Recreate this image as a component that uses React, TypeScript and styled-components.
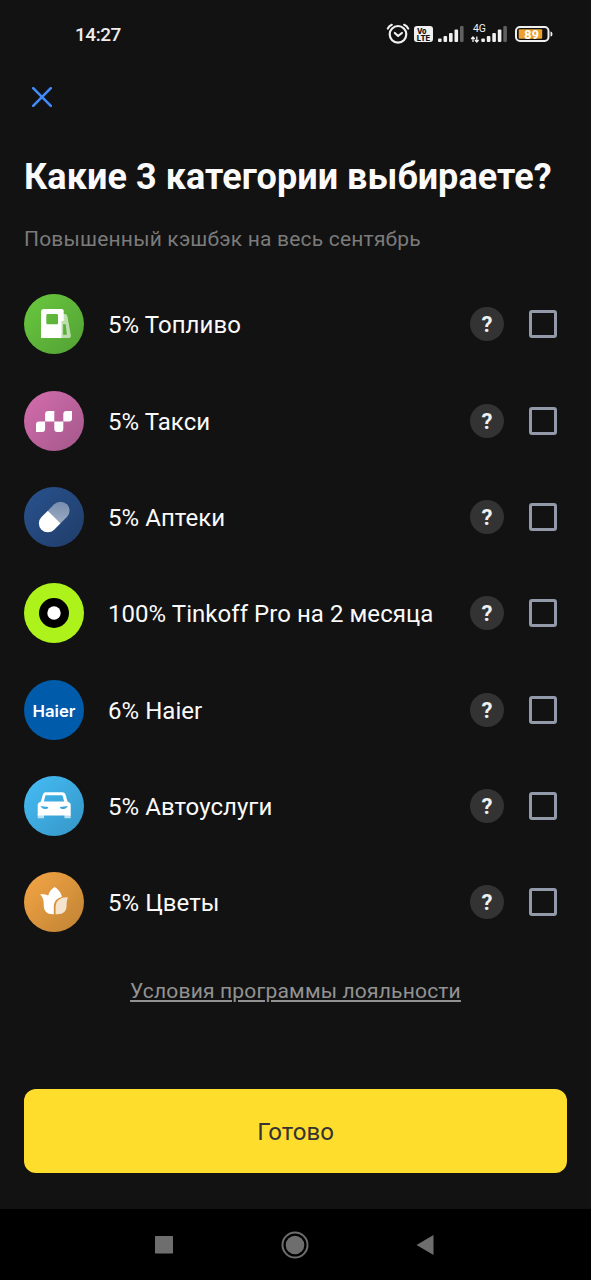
import React from "react";
import styled, { createGlobalStyle } from "styled-components";

const GlobalStyle = createGlobalStyle`
  * { box-sizing: border-box; }
  body { margin: 0; background: #121212; }
`;

const Screen = styled.div`
  width: 591px;
  height: 1280px;
  display: flex;
  flex-direction: column;
  overflow: hidden;
  background: #121212;
  color: #fafafa;
  font-family: Roboto, sans-serif;
`;

const StatusBar = styled.header`
  height: 68px;
  flex: none;
  display: flex;
  align-items: center;
  justify-content: space-between;
  padding: 0 37px 0 75px;
`;

const Clock = styled.time`
  font-size: 19px;
  font-weight: 500;
  line-height: 24px;
  letter-spacing: -0.45px;
  color: #ededed;
  padding-top: 2px;
`;

const Content = styled.main`
  flex: 1;
  display: flex;
  flex-direction: column;
  padding: 0 24px;
`;

const CloseButton = styled.button`
  width: 36px;
  height: 36px;
  margin-top: 11px;
  padding: 0;
  border: 0;
  background: none;
  display: grid;
  place-items: center;
`;

const Title = styled.h1`
  margin: 41px 0 0;
  font-size: 36px;
  font-weight: 700;
  line-height: 42px;
  letter-spacing: 0.06px;
  white-space: nowrap;
`;

const Subtitle = styled.p`
  margin: 28px 0 0;
  font-size: 21px;
  line-height: 26px;
  letter-spacing: 0.19px;
  color: #7b7b7b;
  white-space: nowrap;
`;

const List = styled.ul`
  list-style: none;
  margin: 24.3px 0 0;
  padding: 0;
`;

const Row = styled.li`
  height: 96.3px;
  display: flex;
  align-items: center;
`;

const Label = styled.span`
  flex: 1;
  margin-left: 24px;
  padding-top: 2px;
  font-size: 24px;
  line-height: 30px;
  letter-spacing: 0.05px;
  white-space: nowrap;
`;

const HelpButton = styled.button`
  width: 34px;
  height: 34px;
  padding: 1px 0 0;
  border: 0;
  border-radius: 50%;
  background: #333;
  color: #f0f0f0;
  font: 700 22px/33px Roboto, sans-serif;
  text-align: center;
`;

const Checkbox = styled.span`
  width: 28px;
  height: 28px;
  margin: 0 10.5px 0 24.5px;
  border: 3px solid #9299a8;
  border-radius: 3px;
`;

const Terms = styled.a`
  align-self: center;
  margin-top: 27.7px;
  font-size: 21px;
  line-height: 26px;
  letter-spacing: 0.19px;
  color: #929292;
  text-decoration: underline;
  text-decoration-thickness: 1.5px;
  text-underline-offset: 2px;
  white-space: nowrap;
`;

const DoneButton = styled.button`
  height: 84px;
  margin: auto 0 36px;
  padding: 2px 0 0;
  border: 0;
  border-radius: 12px;
  background: #ffdd2d;
  color: #333;
  font: 400 24px/30px Roboto, sans-serif;
`;

const NavBar = styled.nav`
  height: 71px;
  flex: none;
  display: flex;
  align-items: center;
  justify-content: space-between;
  padding: 0 155px 0 154px;
  background: #000;
`;

const Glyph = styled.svg`
  display: block;
  flex: none;
`;

const Disc = ({ id, from, to, children }: { id: string; from: string; to: string; children: React.ReactNode }) => (
  <Glyph width="60" height="60" viewBox="0 0 60 60">
    <defs>
      <linearGradient id={id} x1="0.1" y1="0.1" x2="0.9" y2="0.9">
        <stop stopColor={from} />
        <stop offset="1" stopColor={to} />
      </linearGradient>
    </defs>
    <circle cx="30" cy="30" r="30" fill={`url(#${id})`} />
    {children}
  </Glyph>
);

const FuelIcon = () => (
  <Disc id="fuel" from="#67c53d" to="#55a436">
    <path fillRule="evenodd" fill="#fff" fillOpacity=".6" d="M37.5 20h3.2c1.7 0 2.4 1 2.8 2.8l3.3 18.5c.3 1.8-.4 2.7-2 2.7h-7.3zm1.6 10.2v10.6h3.8l-1.2-10.6z" />
    <path fillRule="evenodd" fill="#fff" d="M20 15h17.7c1.3 0 2 .7 2 2v10h-2v17H17V18c0-2 1-3 3-3zm2.3 6.5v7.3c0 1 .5 1.5 1.5 1.5h8.7c1 0 1.5-.5 1.5-1.5v-7.3c0-1-.5-1.5-1.5-1.5h-8.7c-1 0-1.5.5-1.5 1.5z" />
  </Disc>
);

const TaxiIcon = () => (
  <Disc id="taxi" from="#cf6baa" to="#a85a8e">
    <g fill="#fff">
      <path d="M15 30.6h6.1V38q0 3-3 3H12v-7.4q0-3 3-3z" />
      <path d="M24.1 20h6.2v10.6h-9.2V23q0-3 3-3z" />
      <path d="M30.3 30.6h9V38q0 3-3 3h-3q-3 0-3-3z" />
      <path d="M42.3 20H48v7.6q0 3-3 3h-5.7V23q0-3 3-3z" />
    </g>
  </Disc>
);

const PillIcon = () => (
  <Disc id="pill" from="#27508a" to="#213f6d">
    <defs>
      <linearGradient id="cap" x1="1" y1="0" x2="0" y2="1">
        <stop stopColor="#fff" stopOpacity=".35" />
        <stop offset="1" stopColor="#fff" stopOpacity=".55" />
      </linearGradient>
    </defs>
    <g transform="translate(30.2 30) rotate(-45)">
      <path fill="#fff" d="M0-9v18h-9a9 9 0 0 1 0-18z" />
      <path fill="url(#cap)" d="M0-9v18h9a9 9 0 0 0 0-18z" />
    </g>
  </Disc>
);

const TargetIcon = () => (
  <Disc id="pro" from="#adf31b" to="#adf31b">
    <circle cx="30" cy="30" r="15" fill="#000" />
    <circle cx="30" cy="30" r="6.7" fill="#fff" />
  </Disc>
);

const HaierIcon = () => (
  <Disc id="haier" from="#005bab" to="#005bab">
    <text x="8.5" y="36.5" fill="#fff" fontFamily="Inter, sans-serif" fontSize="16.5" fontWeight="600" textLength="43" lengthAdjust="spacingAndGlyphs">Haier</text>
  </Disc>
);

const CarIcon = () => (
  <Disc id="car" from="#43b9f1" to="#3799ca">
    <path fill="#fff" fillOpacity=".65" d="M13.7 38h6.3v4.2h-6.3zM40.4 38h6.3v4.2h-6.3z" />
    <path fillRule="evenodd" fill="#fff" d="M21.8 16.3h16.4c1.9 0 3 .9 3.5 2.7l1.8 6.4 1.5.9c1.2.8 1.7 1.7 1.7 3.2v9.9h-33v-9.9c0-1.5.5-2.4 1.7-3.2l1.5-.9 1.8-6.4c.5-1.8 1.4-2.7 3.1-2.7zm.7 2.9c-.8 0-1.1.3-1.3 1l-1.3 5.2h20.2l-1.3-5.2c-.2-.7-.6-1-1.3-1zM16.5 30.1c1.2 2 2.4 3 4.2 3h1.5c1.3 0 2-.7 2.1-2zM43.8 30.1c-1.2 2-2.4 3-4.2 3h-1.5c-1.3 0-2-.7-2.1-2z" />
  </Disc>
);

const FlowerIcon = () => (
  <Disc id="flower" from="#f0a243" to="#c48636">
    <path fill="#fff" d="M30.7 15c3 2 5.6 4.6 6.6 7.8l.5 2.3c-5 1-8 4.5-8 10v7.1h-1c-5.7 0-9-3.2-9-8.5 0-4.6-.3-7.7-3.8-11.4 3.4-.1 6.3.1 8.3 1.2.6-3.6 2.9-6.3 6.4-8.5z" />
    <path fill="#fff" fillOpacity=".75" d="M44 25.2c-1.2 2.4-1.4 5.3-1.4 8.3 0 5.6-3.2 8.7-9.4 8.7h-1.6v-6.4c0-7.6 4.8-10.8 12.4-10.6z" />
  </Disc>
);

const SignalBars = ({ x }: { x: number }) => (
  <g fill="#f0f0f0">
    <rect x={x} y="24.5" width="3.6" height="3.5" rx="1" />
    <rect x={x + 5.5} y="22" width="3.6" height="6" rx="1" />
    <rect x={x + 11} y="19" width="3.6" height="9" rx="1" />
    <rect x={x + 16.5} y="15.5" width="3.6" height="12.5" rx="1" />
    <rect x={x + 22} y="12" width="3.6" height="16" rx="1" fill="#606060" />
  </g>
);

const StatusIcons = () => (
  <Glyph width="168" height="40" viewBox="0 0 168 40" fontFamily="Roboto, sans-serif">
    <g fill="none" stroke="#f0f0f0" strokeWidth="2.2" strokeLinecap="round" strokeLinejoin="round">
      <circle cx="12" cy="20.3" r="8.3" />
      <path d="m8.8 19 3.3 3 3.8-3M1.8 14.6Q3 12 5.8 10.8M22.2 14.6Q21 12 18.2 10.8" />
    </g>
    <rect x="28" y="12" width="19" height="16" rx="3" fill="#f0f0f0" />
    <g fill="#121212" fontFamily="Inter, sans-serif" fontWeight="800" fontSize="7.5">
      <text x="31" y="19.5" textLength="9.5" lengthAdjust="spacingAndGlyphs">Vo</text>
      <text x="30.8" y="26.5" textLength="13.5" lengthAdjust="spacingAndGlyphs">LTE</text>
    </g>
    <SignalBars x={52} />
    <text x="87" y="18" fontSize="10.5" fill="#f0f0f0" textLength="13" lengthAdjust="spacingAndGlyphs">4G</text>
    <path d="M87 28v-4.3M85.2 25l1.8-2 1.8 2M90.8 22.5v4.3M89 26l1.8 2 1.8-2" stroke="#f0f0f0" strokeWidth="1.3" fill="none" />
    <SignalBars x={95.3} />
    <rect x="130" y="13" width="32.5" height="14" rx="4" fill="none" stroke="#f0f0f0" strokeWidth="2" />
    <rect x="132.7" y="15.2" width="23.5" height="9.6" rx="1" fill="#eba12f" />
    <path d="M164.5 17.5q2 0 2 2.5t-2 2.5z" fill="#f0f0f0" />
    <text x="138.3" y="24.5" fontSize="12.5" fontWeight="700" fill="#fff" textLength="14.5">89</text>
  </Glyph>
);

const categories = [
  { label: "5% Топливо", Icon: FuelIcon },
  { label: "5% Такси", Icon: TaxiIcon },
  { label: "5% Аптеки", Icon: PillIcon },
  { label: "100% Tinkoff Pro на 2 месяца", Icon: TargetIcon },
  { label: "6% Haier", Icon: HaierIcon },
  { label: "5% Автоуслуги", Icon: CarIcon },
  { label: "5% Цветы", Icon: FlowerIcon },
];

export default function App() {
  return (
    <Screen>
      <GlobalStyle />
      <StatusBar>
        <Clock>14:27</Clock>
        <StatusIcons />
      </StatusBar>
      <Content>
        <CloseButton aria-label="Закрыть">
          <Glyph width="20" height="20" viewBox="0 0 20 20">
            <path d="m1.2 1.2 17.6 17.6M18.8 1.2 1.2 18.8" stroke="#428bf9" strokeWidth="2.6" strokeLinecap="round" />
          </Glyph>
        </CloseButton>
        <Title>Какие 3 категории выбираете?</Title>
        <Subtitle>Повышенный кэшбэк на весь сентябрь</Subtitle>
        <List>
          {categories.map(({ label, Icon }) => (
            <Row key={label}>
              <Icon />
              <Label>{label}</Label>
              <HelpButton>?</HelpButton>
              <Checkbox role="checkbox" aria-checked={false} />
            </Row>
          ))}
        </List>
        <Terms>Условия программы лояльности</Terms>
        <DoneButton>Готово</DoneButton>
      </Content>
      <NavBar>
        <Glyph width="20" height="20" viewBox="0 0 20 20">
          <rect x="1" y="1" width="18" height="17.5" rx=".5" fill="#6e6e6e" />
        </Glyph>
        <Glyph width="28" height="28" viewBox="0 0 28 28">
          <circle cx="14" cy="14" r="12.5" fill="none" stroke="#6e6e6e" strokeWidth="2" />
          <circle cx="14" cy="14" r="9.3" fill="#6e6e6e" />
        </Glyph>
        <Glyph width="20" height="22" viewBox="0 0 20 22">
          <path d="M17.5 1v20L.5 11z" fill="#6e6e6e" />
        </Glyph>
      </NavBar>
    </Screen>
  );
}
